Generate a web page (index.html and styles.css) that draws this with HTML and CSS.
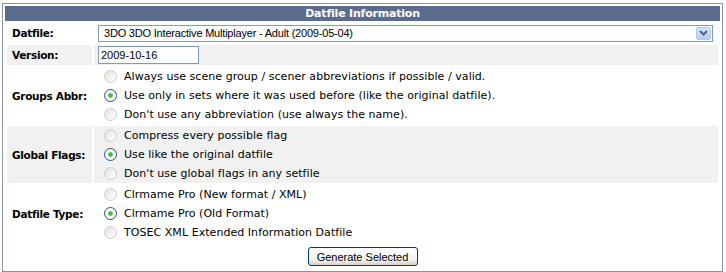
FILE: index.html
```html
<!DOCTYPE html>
<html>
<head>
<meta charset="utf-8">
<link rel="stylesheet" href="styles.css">
</head>
<body>
<div class="frame">
  <div class="title">Datfile Information</div>
  <div class="grid">
    <div class="lbl">Datfile:</div>
    <div class="val">
      <div class="select">
        <span class="select-text">3DO 3DO Interactive Multiplayer - Adult (2009-05-04)</span>
        <span class="select-btn"><svg width="9" height="6" viewBox="0 0 9 6"><path d="M1 1 L4.5 4.5 L8 1" fill="none" stroke="#4d6185" stroke-width="2"/></svg></span>
      </div>
    </div>

    <div class="lbl alt">Version:</div>
    <div class="val alt"><div class="input">2009-10-16</div></div>

    <div class="lbl">Groups Abbr:</div>
    <div class="val opts">
      <label class="opt"><span class="radio"></span>Always use scene group / scener abbreviations if possible / valid.</label>
      <label class="opt"><span class="radio on"></span>Use only in sets where it was used before (like the original datfile).</label>
      <label class="opt"><span class="radio"></span>Don't use any abbreviation (use always the name).</label>
    </div>

    <div class="lbl alt">Global Flags:</div>
    <div class="val alt opts">
      <label class="opt"><span class="radio"></span>Compress every possible flag</label>
      <label class="opt"><span class="radio on"></span>Use like the original datfile</label>
      <label class="opt"><span class="radio"></span>Don't use global flags in any setfile</label>
    </div>

    <div class="lbl">Datfile Type:</div>
    <div class="val opts">
      <label class="opt"><span class="radio"></span>Clrmame Pro (New format / XML)</label>
      <label class="opt"><span class="radio on"></span>Clrmame Pro (Old Format)</label>
      <label class="opt"><span class="radio"></span>TOSEC XML Extended Information Datfile</label>
    </div>

    <div class="actions"><button class="btn">Generate Selected</button></div>
  </div>
</div>
</body>
</html>
```
FILE: styles.css
```css
html, body {
  margin: 0;
  padding: 0;
  background: #fff;
}
body {
  font-family: "DejaVu Sans", Verdana, sans-serif;
  font-size: 11px;
  color: #000;
}
.frame {
  margin: 3px 0 0 2px;
  width: 715px;
  padding: 2px;
  border: 1px solid #8891a9;
}
.title {
  height: 15px;
  line-height: 15px;
  background: #5b6b8b;
  color: #fff;
  font-weight: bold;
  text-align: center;
  font-size: 11px;
  letter-spacing: -0.2px;
}
.grid {
  display: grid;
  grid-template-columns: 85px 624px;
  grid-template-rows: 20px 20px 57px 57px 57px 23px;
  gap: 2px;
  padding: 2px;
}
.lbl {
  display: flex;
  align-items: center;
  padding-left: 5px;
  font-weight: bold;
  font-size: 10.5px;
  letter-spacing: -0.3px;
  white-space: nowrap;
}
.alt {
  background: #f1f1f1;
}
.val {
  display: flex;
  align-items: center;
  padding-left: 4px;
}
.select {
  display: flex;
  align-items: center;
  width: 613px;
  height: 15px;
  border: 1px solid #7f9db9;
  background: #fff;
  font-family: "Liberation Sans", Arial, sans-serif;
  font-size: 11px;
  letter-spacing: -0.2px;
}
.select-text {
  flex: 1;
  padding-left: 5px;
}
.select-btn {
  width: 15px;
  height: 13px;
  margin-right: 1px;
  border: 1px solid #b4c6ee;
  border-radius: 2px;
  background: linear-gradient(#d8e4fd, #b7cbf7);
  display: flex;
  align-items: center;
  justify-content: center;
  box-sizing: border-box;
}
.input {
  width: 97px;
  height: 16px;
  line-height: 16px;
  border: 1px solid #7f9db9;
  background: #fff;
  padding-left: 2px;
  font-family: "Liberation Sans", Arial, sans-serif;
  font-size: 11px;
}
.opts {
  flex-direction: column;
  align-items: flex-start;
  justify-content: center;
  padding-left: 10px;
}
.opt {
  display: flex;
  align-items: center;
  height: 19px;
  letter-spacing: 0.05px;
}
.radio {
  width: 13px;
  height: 13px;
  box-sizing: border-box;
  border-radius: 50%;
  border: 1px solid #c9ccd0;
  background: linear-gradient(135deg, #e3e3de, #fff);
  margin-right: 7px;
}
.radio.on {
  border-color: #1c5180;
  background: radial-gradient(circle at 50% 50%, #2fb52f 0, #4fc44f 2px, #fff 2.6px, #fff 100%);
}
.actions {
  grid-column: 1 / 3;
  display: flex;
  justify-content: center;
  align-items: flex-start;
  padding-top: 3px;
}
.btn {
  width: 110px;
  height: 19px;
  padding: 0;
  border: 1px solid #003c74;
  border-radius: 3px;
  background: linear-gradient(#fff, #f3f3ef 70%, #d6d0c5);
  font-family: "Liberation Sans", Arial, sans-serif;
  font-size: 11px;
  color: #000;
}
```
